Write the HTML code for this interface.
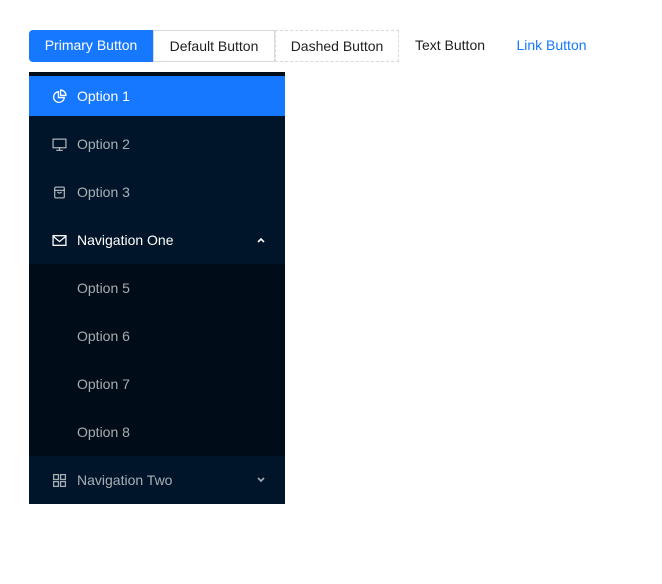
<!DOCTYPE html>
<html><head><style>
body{margin:0;background:#fff;font-family:"Segoe UI","Liberation Sans",sans-serif;font-size:14px;width:662px;height:584px;position:relative;overflow:hidden}
.b{position:absolute;top:30px;height:32px;box-sizing:border-box;line-height:31px;text-align:center;color:rgba(0,0,0,.88)}
.menu{position:absolute;left:29px;top:72px;width:256px;height:432px;background:#001529;border-top:4px solid #000c17;box-sizing:border-box}
.it{position:absolute;left:0;width:256px;height:40px;line-height:40px;color:rgba(255,255,255,.65)}
.it span{position:absolute;left:48px}
.ic{position:absolute;left:23px;top:13px}
.sub{position:absolute;left:0;top:188px;width:256px;height:192px;background:#000c17}
</style></head><body>
<div class="b" style="left:29px;width:124px;background:#1677ff;color:#fff;border-radius:4px 0 0 4px">Primary Button</div>
<div class="b" style="left:153px;width:122px;border:1px solid #d9d9d9">Default Button</div>
<div class="b" style="left:275px;width:124px;border:1px dashed #d9d9d9">Dashed Button</div>
<div class="b" style="left:399px;width:102px">Text Button</div>
<div class="b" style="left:501px;width:101px;color:#1677ff">Link Button</div>
<div class="menu">
<div class="it" style="top:0;background:#1677ff;color:#fff"><svg class="ic" width="15" height="15" viewBox="0 0 14 14" fill="none" stroke="#fff" stroke-width="1.2"><path d="M6 2.5A5 5 0 1 0 11.5 8H6Z"/><path d="M8 1v5h5A5 5 0 0 0 8 1Z"/></svg><span>Option 1</span></div>
<div class="it" style="top:48px"><svg class="ic" width="15" height="15" viewBox="0 0 14 14" fill="none" stroke="rgba(255,255,255,.65)" stroke-width="1.2"><rect x="1" y="2" width="12" height="8"/><path d="M7 10v2M4 12.5h6"/></svg><span>Option 2</span></div>
<div class="it" style="top:96px"><svg class="ic" width="15" height="15" viewBox="0 0 14 14" fill="none" stroke="rgba(255,255,255,.65)" stroke-width="1.2"><rect x="2.5" y="2" width="9" height="10" rx="1"/><path d="M2.5 5h9M5 6.5q2 2 4 0"/></svg><span>Option 3</span></div>
<div class="it" style="top:144px;color:#fff"><svg class="ic" width="15" height="15" viewBox="0 0 14 14" fill="none" stroke="#fff" stroke-width="1.2"><rect x="1" y="2.5" width="12" height="9"/><path d="M1 3l6 5 6-5"/></svg><span>Navigation One</span><svg style="position:absolute;left:228px;top:17px" width="8" height="6" viewBox="0 0 8 6"><path d="M1 5l3-3 3 3" stroke="#fff" stroke-width="1.6" fill="none"/></svg></div>
<div class="sub">
<div class="it" style="top:4px"><span>Option 5</span></div>
<div class="it" style="top:52px"><span>Option 6</span></div>
<div class="it" style="top:100px"><span>Option 7</span></div>
<div class="it" style="top:148px"><span>Option 8</span></div>
</div>
<div class="it" style="top:384px"><svg class="ic" width="15" height="15" viewBox="0 0 14 14" fill="none" stroke="rgba(255,255,255,.65)" stroke-width="1.2"><rect x="1.5" y="1.5" width="4.5" height="4.5"/><rect x="8" y="1.5" width="4.5" height="4.5"/><rect x="1.5" y="8" width="4.5" height="4.5"/><rect x="8" y="8" width="4.5" height="4.5"/></svg><span>Navigation Two</span><svg style="position:absolute;left:228px;top:17px" width="8" height="6" viewBox="0 0 8 6"><path d="M1 1l3 3 3-3" stroke="rgba(255,255,255,.65)" stroke-width="1.6" fill="none"/></svg></div>
</div>
</body></html>
